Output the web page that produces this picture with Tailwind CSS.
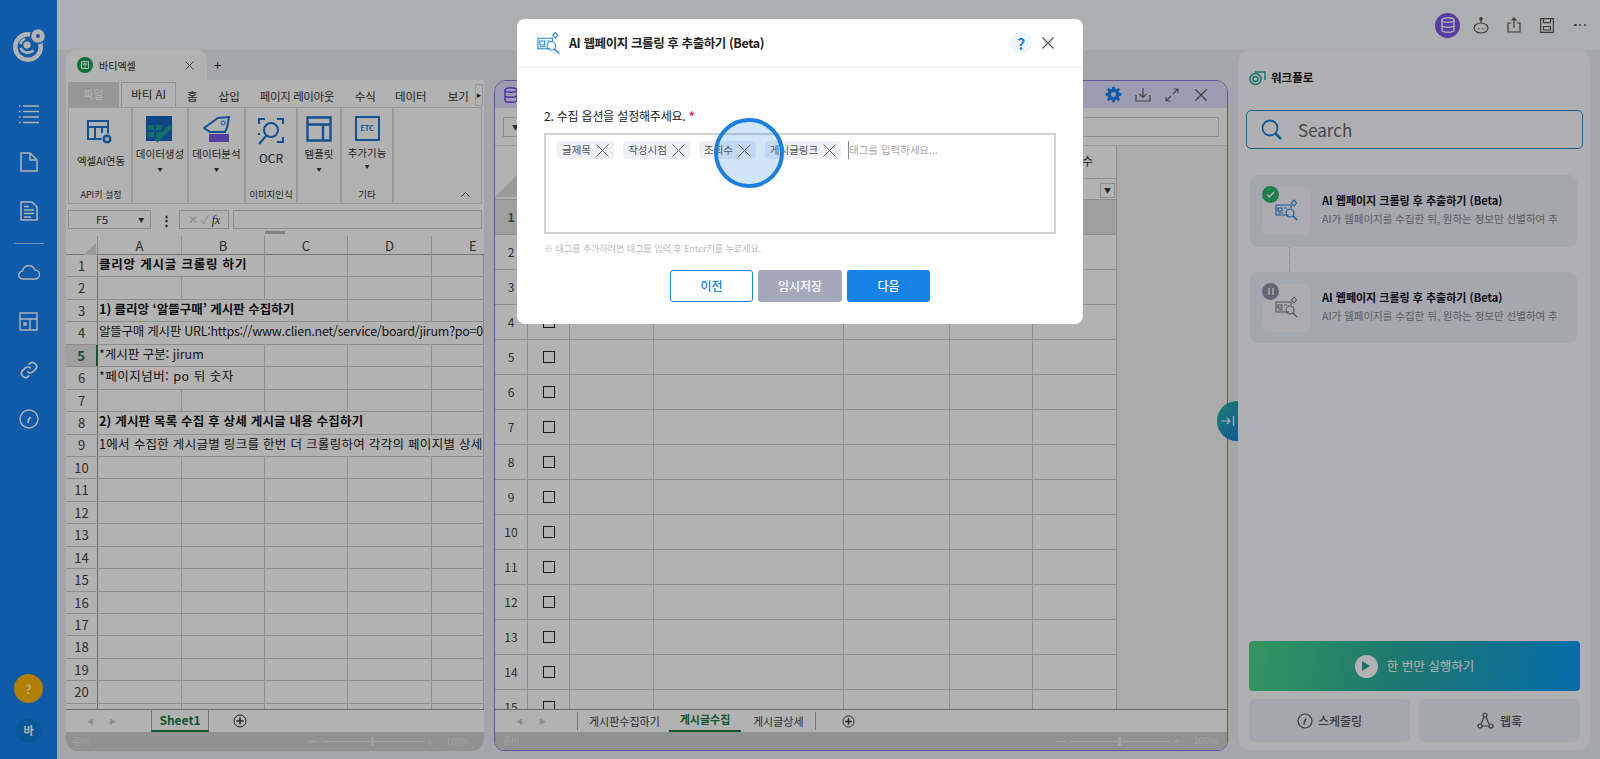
<!DOCTYPE html>
<html lang="ko"><head><meta charset="utf-8"><script src="https://cdn.jsdelivr.net/npm/@tailwindcss/browser@4"></script></head>
<body class="overflow-hidden">
<div class="relative flex h-[759px] w-[1600px] overflow-hidden bg-[#f9fafc] font-['Noto_Sans_CJK_KR','Noto_Sans',sans-serif] text-[#222]">
  <!-- sidebar -->
  <aside class="flex w-[57px] shrink-0 flex-col items-center bg-[#1683f4] text-white">
    <svg class="mt-[27px]" width="34" height="36" viewBox="0 0 34 36" fill="none"><circle cx="16" cy="20" r="15" fill="white"/><circle cx="16" cy="20" r="10.500" fill="#1683f4"/><circle cx="26" cy="9" r="7.500" fill="white" stroke="#1683f4" stroke-width="1.500"/><circle cx="26" cy="9" r="2" fill="#1683f4"/><circle cx="15" cy="18" r="3.600" fill="white"/><path d="M8.500 21c2.500 5 8 6 13 2.500" stroke="white" stroke-width="2.600"/><path d="M13 11.500c-2 1-4 3-4.500 5.500" stroke="white" stroke-width="2.400"/></svg>
    <svg class="mt-[41px]" width="20" height="20" viewBox="0 0 20 20" stroke="white" stroke-width="1.5" fill="none"><path d="M4 2h16M4 7.5h16M4 13h16M4 18.500h16"/><path d="M0 2h1.500M0 7.500h1.500M0 13h1.500M0 18.500h1.500"/></svg>
    <svg class="mt-[28px]" width="18" height="20" viewBox="0 0 18 20" stroke="white" stroke-width="1.500" fill="none"><path d="M1 1h9l7 7v11H1zM10 1v7h7"/></svg>
    <svg class="mt-[29px]" width="18" height="20" viewBox="0 0 18 20" stroke="white" stroke-width="1.500" fill="none"><path d="M1 1h11l5 5v13H1zM4 9h10M4 12.500h10M4 16h7M4 5.500h5"/></svg>
    <div class="mt-[22px] h-px w-[30px] bg-white/60"></div>
    <svg class="mt-[20px]" width="22" height="16" viewBox="0 0 22 16" stroke="white" stroke-width="1.400" fill="none"><path d="M5 15a4 4 0 0 1-.500-8A6.500 6.500 0 0 1 17 6a4.500 4.500 0 0 1 0 9z"/></svg>
    <svg class="mt-[32px]" width="19" height="19" viewBox="0 0 19 19" stroke="white" stroke-width="1.400" fill="none"><path d="M1 1h17v17H1zM1 7h17M11 7v11"/><rect x="5" y="11" width="2" height="2" fill="white"/></svg>
    <svg class="mt-[29px]" width="20" height="20" viewBox="0 0 24 24" stroke="white" stroke-width="2" fill="none"><path d="M10 14a5 5 0 0 0 7 0l3-3a5 5 0 0 0-7-7l-1.500 1.500M14 10a5 5 0 0 0-7 0l-3 3a5 5 0 0 0 7 7l1.500-1.500"/></svg>
    <svg class="mt-[29px]" width="20" height="20" viewBox="0 0 20 20" stroke="white" stroke-width="1.400" fill="none"><circle cx="10" cy="10" r="9"/><path d="M9 14l.500-3 2-3" stroke-width="1.800"/></svg>
    <div class="mt-auto flex h-[29px] w-[29px] items-center justify-center rounded-full bg-[#ffb700] text-[12px] font-bold text-white/80">?</div>
    <div class="mb-[16px] mt-[15px] flex h-[25px] w-[25px] items-center justify-center rounded-full bg-[#0a7fd8] text-[11px] font-bold text-white">바</div>
  </aside>

  <main class="flex min-w-0 flex-1 flex-col">
    <!-- top bar -->
    <div class="flex h-[50px] items-center justify-end bg-[#f8f9fc] pr-[14px]">
      <div class="flex h-[25px] w-[25px] items-center justify-center rounded-full bg-[#7a5ae8]">
        <svg width="14" height="16" viewBox="0 0 14 16" fill="none" stroke="white" stroke-width="1.400"><ellipse cx="7" cy="3" rx="6" ry="2.300"/><path d="M1 3v10c0 1.300 2.700 2.300 6 2.300s6-1 6-2.300V3M1 8c0 1.300 2.700 2.300 6 2.300S13 9.300 13 8"/></svg>
      </div>
      <svg class="ml-[13px]" width="16" height="17" viewBox="0 0 16 17" fill="none" stroke="#555" stroke-width="1.200"><ellipse cx="8" cy="11" rx="7" ry="5"/><path d="M8 6V2"/><circle cx="8" cy="1.800" r="1.200" fill="#555"/><path d="M6 11v1M10 11v1"/></svg>
      <svg class="ml-[18px]" width="14" height="16" viewBox="0 0 14 16" fill="none" stroke="#555" stroke-width="1.200"><path d="M4 6H1v9h12V6h-3M7 11V1M4.500 3.500L7 1l2.500 2.500"/></svg>
      <svg class="ml-[19px]" width="14" height="15" viewBox="0 0 14 15" fill="none" stroke="#555" stroke-width="1.200"><path d="M.6.6h12.800v13.800H.6zM3.500.6v4h7v-4M3.500 8.500h7v3.500h-7z"/></svg>
      <div class="ml-[20px] flex w-[12px] justify-between"><span class="h-[2.500px] w-[2.500px] rounded-full bg-[#555]"></span><span class="h-[2.500px] w-[2.500px] rounded-full bg-[#555]"></span><span class="h-[2.500px] w-[2.500px] rounded-full bg-[#555]"></span></div>
    </div>

    <div class="relative flex min-h-0 flex-1 gap-[10px] bg-[#eceef6] pb-[8px] pl-[9px] pr-[10px]">
      <!-- left sheet -->
      <section class="flex w-[418px] shrink-0 flex-col overflow-hidden rounded-b-[12px]">
        <div class="flex h-[30px] shrink-0 items-center">
          <div class="flex h-[30px] w-[141px] items-center rounded-t-[10px] bg-white pl-[11px]">
            <span class="flex h-[16px] w-[16px] items-center justify-center rounded-full bg-[#17a34f]"><svg width="8" height="8" viewBox="0 0 8 8" fill="none" stroke="white"><path d="M.5.500h7v7h-7zM.5 3h7M4 .5v7"/></svg></span>
            <span class="ml-[6px] text-[10px] text-[#333]">바티엑셀</span>
            <svg class="ml-[49px]" width="9" height="9" viewBox="0 0 9 9" stroke="#666"><path d="M.5.500l8 8M8.500.500l-8 8"/></svg>
          </div>
          <span class="ml-[7px] text-[13px] text-[#222]">+</span>
        </div>
        <div class="flex min-h-0 flex-1 flex-col bg-white pt-[2px]">
          <div class="flex h-[25px] shrink-0 whitespace-nowrap px-[2px] text-[11.500px] text-[#333]">
            <div class="flex w-[51px] shrink-0 items-center justify-center bg-[#d8d8d8] text-[11px] text-white">파일</div>
            <div class="ml-[2px] flex w-[55px] shrink-0 items-center justify-center border border-b-0 border-[#d0d0d0] bg-white">바티 AI</div>
            <span class="ml-[11px] shrink-0 leading-[28px]">홈</span>
            <span class="ml-[21px] shrink-0 leading-[28px]">삽입</span>
            <span class="ml-[20px] w-[72px] shrink-0 leading-[28px] tracking-[-0.4px]">페이지 레이아웃</span>
            <span class="ml-[23px] shrink-0 leading-[28px]">수식</span>
            <span class="ml-[19px] shrink-0 leading-[28px]">데이터</span>
            <span class="ml-[21px] shrink-0 leading-[28px]">보기</span>
            <span class="ml-[6px] mt-[2px] flex h-[22px] w-[8px] shrink-0 items-center justify-center border border-[#ddd] text-[5px]">▶</span>
          </div>
          <!-- ribbon -->
          <div class="mx-[2px] flex h-[97px] shrink-0 border border-[#ddd] text-[11px] text-[#333]">
            <div class="flex w-[64px] flex-col items-center border-r-2 border-[#ddd] pl-[2px] pt-[11px]">
              <svg width="28" height="28" viewBox="0 0 28 28" fill="none" stroke="#1976d2" stroke-width="2"><path d="M1 2h20v18H1zM1 8h20M8 8v12M15 8v6"/><circle cx="20" cy="20" r="5" fill="#1976d2" stroke="white" stroke-width="1"/><circle cx="20" cy="20" r="2" fill="white" stroke="none"/></svg>
              <span class="mt-[6px] whitespace-nowrap text-[10.500px]">엑셀AI연동</span>
              <span class="mb-[2px] mt-auto whitespace-nowrap text-[9px]">API키 설정</span>
            </div>
            <div class="flex w-[56px] flex-col items-center border-r-2 border-[#ddd] pt-[8px]">
              <svg width="28" height="27" viewBox="0 0 28 27"><rect width="26" height="25" fill="#1565c0"/><g fill="#1a9d8f"><rect x="2" y="9" width="6" height="5"/><rect x="10" y="9" width="6" height="5"/><rect x="2" y="16" width="6" height="5"/><rect x="10" y="16" width="6" height="5"/></g><path d="M10 25L25 10" stroke="#17a398" stroke-width="4"/></svg>
              <span class="mt-[3px] whitespace-nowrap text-[10.500px]">데이터생성</span>
              <span class="mt-[3px] text-[5px]">▼</span>
            </div>
            <div class="flex w-[57px] flex-col items-center border-r-2 border-[#ddd] pt-[7px]">
              <svg width="28" height="28" viewBox="0 0 28 28" fill="none"><path d="M1 13L15 3l11-1-2 11-2 4H7z" stroke="#1976d2" stroke-width="2"/><circle cx="20" cy="8" r="2" stroke="#1976d2"/><rect x="6" y="19" width="20" height="8" fill="#7a5be0"/></svg>
              <span class="mt-[3px] whitespace-nowrap text-[10.500px]">데이터분석</span>
              <span class="mt-[3px] text-[5px]">▼</span>
            </div>
            <div class="flex w-[52px] flex-col items-center border-r-2 border-[#ddd] pt-[9px]">
              <svg width="28" height="28" viewBox="0 0 28 28" fill="none" stroke="#1976d2" stroke-width="2"><path d="M2 7V2h6M20 2h6v5M26 20v5h-6M2 16v2"/><circle cx="14" cy="13" r="7"/><path d="M9 19l-7 8"/></svg>
              <span class="mt-[4px] text-[12px]">OCR</span>
              <span class="mb-[2px] mt-auto whitespace-nowrap text-[9.500px]">이미지인식</span>
            </div>
            <div class="flex w-[44px] flex-col items-center border-r-2 border-[#ddd] pt-[8px]">
              <svg width="26" height="26" viewBox="0 0 26 26" fill="none" stroke="#1976d2" stroke-width="2.400"><path d="M1.500 1.500h23v23h-23zM1.500 8.500h23M17 8.500v16"/></svg>
              <span class="mt-[4px] whitespace-nowrap text-[10.500px]">템플릿</span>
              <span class="mt-[3px] text-[5px]">▼</span>
            </div>
            <div class="flex w-[52px] flex-col items-center border-r-2 border-[#ddd] pt-[8px]">
              <div class="flex h-[25px] w-[25px] items-center justify-center border-[2.500px] border-[#1976d2] text-[7px] font-bold text-[#1976d2]">ETC</div>
              <span class="mt-[4px] whitespace-nowrap text-[10.500px]">추가기능</span>
              <span class="mt-[1px] text-[5px]">▼</span>
              <span class="mb-[2px] mt-auto text-[9.500px]">기타</span>
            </div>
            <div class="flex flex-1 items-end justify-end pb-[6px] pr-[11px]"><svg width="9" height="6" viewBox="0 0 9 6" fill="none" stroke="#444"><path d="M.5 5.500l4-4 4 4"/></svg></div>
          </div>
          <!-- formula -->
          <div class="mt-[6px] flex h-[19px] shrink-0 items-center px-[2px] text-[11px] text-[#333]">
            <div class="flex h-full w-[83px] items-center border border-[#ccc]"><span class="ml-[27px]">F5</span><span class="ml-[30px] text-[6px]">▼</span></div>
            <span class="ml-[9px] text-[13px] font-bold">⋮</span>
            <div class="ml-[6px] flex h-full w-[50px] items-center justify-center gap-[3px] border border-[#ccc] font-['Liberation_Serif',serif] text-[12px] italic"><span class="not-italic text-[#ccc]">✕</span><span class="not-italic text-[#ccc]">✓</span><span>fx</span></div>
            <div class="ml-[4px] h-full flex-1 border border-[#ccc]"></div>
          </div>
          <div class="mx-auto mt-[2px] h-[3px] w-[20px] shrink-0 bg-[#bbb]"></div>
          <div class="mt-[2px] grid h-[19px] shrink-0 grid-cols-[32px_84px_83px_83px_84px_52px] border-b border-[#aaa] text-center text-[13px] text-[#444]">
            <div class="relative border-r border-[#ccc]"><svg class="absolute bottom-[1px] right-[1px]" width="13" height="12"><path d="M13 0v12H0z" fill="#ddd"/></svg></div>
            <div class="border-r border-[#ccc]">A</div><div class="border-r border-[#ccc]">B</div><div class="border-r border-[#ccc]">C</div><div class="border-r border-[#ccc]">D</div><div class="pl-[37px] text-left">E</div>
          </div>
          <div id="leftrows" class="min-h-0 flex-1 overflow-hidden"></div>
          <div class="flex h-[23px] shrink-0 items-center border-t border-[#999] text-[9px] text-[#ccc]">
            <span class="ml-[21px] text-[7px]">◀</span><span class="ml-[15px] text-[7px]">▶</span>
            <div class="-mt-px ml-[35px] flex h-[23px] w-[58px] items-center justify-center border-x border-b-[2px] border-[#aaa] border-b-[#1c7a46] text-[12px] font-bold text-[#1c7a46]">Sheet1</div>
            <svg class="ml-[24px]" width="14" height="14" viewBox="0 0 14 14" fill="none" stroke="#333"><circle cx="7" cy="7" r="6"/><path d="M3.500 7h7M7 3.500v7" stroke-width="1.500"/></svg>
          </div>
          <div class="flex h-[19px] shrink-0 items-center bg-[#d0d0d0] pl-[8px] text-[9px] text-[#e8e8e8]">
            <span>준비</span>
            <span class="ml-[218px] h-px w-[9px] bg-[#e8e8e8]"></span>
            <span class="relative ml-[5px] h-px w-[100px] bg-[#e8e8e8]"><span class="absolute -top-[4px] left-[48px] h-[9px] w-[3px] bg-[#e8e8e8]"></span></span>
            <span class="ml-[4px] text-[12px]">+</span>
            <span class="ml-[13px]">100%</span>
          </div>
        </div>
      </section>

      <!-- right sheet -->
      <section class="mt-[30px] flex w-[734px] shrink-0 flex-col overflow-hidden rounded-b-[10px] rounded-t-[12px] border border-[#8f74e0] bg-white">
        <div class="flex h-[27px] shrink-0 items-center bg-[#e0dfff] pl-[9px]">
          <svg width="14" height="16" viewBox="0 0 14 16" fill="none" stroke="#6f4be8" stroke-width="1.400"><ellipse cx="7" cy="3" rx="6" ry="2.300"/><path d="M1 3v10c0 1.300 2.700 2.300 6 2.300s6-1 6-2.300V3M1 8c0 1.300 2.700 2.300 6 2.300S13 9.300 13 8"/></svg>
          <svg class="ml-auto" width="17" height="17" viewBox="0 0 24 24" fill="none" stroke="#1683f4" stroke-width="5"><circle cx="12" cy="12" r="6"/><path d="M12 1v4M12 19v4M1 12h4M19 12h4M4 4l3 3M17 17l3 3M4 20l3-3M17 7l3-3" stroke-width="4"/></svg>
          <svg class="ml-[13px]" width="16" height="15" viewBox="0 0 16 15" fill="none" stroke="#666" stroke-width="1.200"><path d="M1 8v6h14V8M8 1v9M4.500 7L8 10.500 11.500 7"/></svg>
          <svg class="ml-[14px]" width="14" height="14" viewBox="0 0 14 14" fill="none" stroke="#666" stroke-width="1.200"><path d="M8 6l5-5M9 1h4v4M6 8l-5 5M1 9v4h4"/></svg>
          <svg class="ml-[16px] mr-[20px]" width="12" height="12" viewBox="0 0 12 12" stroke="#555" stroke-width="1.100"><path d="M.5.500l11 11M11.500.500l-11 11"/></svg>
        </div>
        <div class="flex h-[38px] shrink-0 items-center border-b border-[#ddd] px-[8px]">
          <div class="h-[20px] w-[30px] border border-[#ccc] pl-[8px] text-[7px] leading-[18px] text-[#444]">▼</div>
          <div class="ml-auto h-[20px] w-[200px] border border-[#ccc]"></div>
        </div>
        <div class="flex min-h-0 flex-1">
          <div class="w-[622px] shrink-0 overflow-hidden">
            <div class="grid h-[54px] grid-cols-[33px_42px_84px_190px_106px_83px_84px] border-b border-[#ccc]">
              <div class="relative border-r border-[#ccc]"><svg class="absolute bottom-[2px] right-0" width="32" height="32"><path d="M32 0v32H0z" fill="#ddd"/></svg></div>
              <div class="border-r border-[#ccc]"></div><div class="border-r border-[#ccc]"></div><div class="border-r border-[#ccc]"></div><div class="border-r border-[#ccc]"></div><div class="border-r border-[#ccc]"></div>
              <div class="relative flex flex-col items-center border-r border-[#ccc] pt-[6px] text-[12px] text-[#333]"><span class="pl-[26px]">수</span><div class="absolute inset-x-0 top-[32px] border-t border-[#ccc]"></div><span class="absolute bottom-[1px] right-[1px] flex h-[15px] w-[15px] items-center justify-center border border-[#ccc] text-[7px]">▼</span></div>
            </div>
            <div id="rightrows" class="overflow-hidden"></div>
          </div>
          <div class="flex-1 bg-[#f5f5f5]"></div>
        </div>
        <div class="flex h-[23px] shrink-0 items-center border-t border-[#999] bg-white text-[11px] text-[#444]">
          <span class="ml-[21px] text-[7px] text-[#ccc]">◀</span><span class="ml-[16px] text-[7px] text-[#ccc]">▶</span>
          <div class="ml-[31px] h-[18px] border-l border-[#aaa]"></div>
          <span class="ml-[11px] w-[80px]">게시판수집하기</span>
          <div class="-mt-px flex h-[23px] w-[72px] items-center justify-center border-b-[2px] border-b-[#1c7a46] font-bold text-[#1c7a46]">게시글수집</div>
          <span class="ml-[12px] w-[62px]">게시글상세</span>
          <div class="h-[18px] border-l border-[#aaa]"></div>
          <svg class="ml-[26px]" width="13" height="13" viewBox="0 0 14 14" fill="none" stroke="#333"><circle cx="7" cy="7" r="6"/><path d="M3.500 7h7M7 3.500v7" stroke-width="1.500"/></svg>
        </div>
        <div class="flex h-[18px] shrink-0 items-center bg-[#d0d0d0] pl-[8px] text-[9px] text-[#e8e8e8]">
          <span>준비</span>
          <span class="ml-auto h-px w-[9px] bg-[#e8e8e8]"></span>
          <span class="relative ml-[5px] h-px w-[100px] bg-[#e8e8e8]"><span class="absolute -top-[4px] left-[48px] h-[9px] w-[3px] bg-[#e8e8e8]"></span></span>
          <span class="ml-[4px] text-[12px]">+</span>
          <span class="ml-[13px] mr-[10px]">100%</span>
        </div>
      </section>

      <!-- workflow panel -->
      <section class="relative mb-px flex min-w-0 flex-1 flex-col rounded-[12px] bg-[#fdfdff] pb-[8px] pl-[8px] pr-[7px]">
        <div class="absolute -left-[21px] top-[351px] flex h-[40px] w-[21px] items-center justify-center rounded-l-full bg-[linear-gradient(135deg,#2bb39a,#1683d8)]"><svg width="14" height="12" viewBox="0 0 14 12" fill="none" stroke="white" stroke-width="1.200"><path d="M0 6h9M6 3l3 3-3 3M12.500 1v10"/></svg></div>
        <div class="ml-[3px] mt-[20px] flex h-[16px] items-center">
          <svg width="17" height="16" viewBox="0 0 17 16" fill="none" stroke="#28a79d" stroke-width="1.500"><circle cx="6.500" cy="9" r="5.500"/><circle cx="6.500" cy="9" r="2.500"/><path d="M6 2h10v8"/></svg>
          <span class="ml-[5px] text-[11.500px] font-bold text-[#111]">워크플로</span>
        </div>
        <div class="mt-[24px] flex h-[39px] items-center rounded-[5px] border border-[#2a8fc8] pl-[14px]">
          <svg width="21" height="21" viewBox="0 0 21 21" fill="none" stroke="#1683d8" stroke-width="1.800"><circle cx="9" cy="9" r="7.500"/><path d="M14.500 14.500l5.500 5.500" stroke-width="2.500"/></svg>
          <span class="ml-[16px] text-[17px] text-[#666]">Search</span>
        </div>
        <div class="ml-[4px] mr-[6px] mt-[26px] flex h-[72px] items-center rounded-[8px] bg-[#eceff9] pl-[13px]">
          <div class="relative flex h-[48px] w-[48px] shrink-0 items-center justify-center rounded-[6px] bg-[#f6f7fc]">
            <span class="absolute -left-[1px] -top-[1px] flex h-[17px] w-[17px] items-center justify-center rounded-full bg-[#2fb36e]"><svg width="9" height="7" viewBox="0 0 9 7" fill="none" stroke="white" stroke-width="1.500"><path d="M1 3.500L3.500 6 8 1"/></svg></span>
            <svg width="24" height="24" viewBox="0 0 24 24" fill="none" stroke="#1b82e0" stroke-width="1.100"><path d="M14 16H1V6h15v3M3 9h4v3H3zM9 9h3M3 14h5"/><circle cx="15" cy="14" r="4"/><path d="M18 17l4 4" stroke-width="1.500"/><path d="M19 1l2.500 3L19 7l-2.500-3z"/></svg>
          </div>
          <div class="mb-[4px] ml-[11px] min-w-0 flex-1 pr-[20px]">
            <div class="truncate text-[11px] font-bold leading-[16px] text-[#111]">AI 웹페이지 크롤링 후 추출하기 (Beta)</div>
            <div class="mt-[3px] overflow-hidden whitespace-nowrap text-[10.500px] leading-[15px] text-[#888]">AI가 웹페이지를 수집한 뒤, 원하는 정보만 선별하여 추출합니다.</div>
          </div>
        </div>
        <div class="ml-[43px] h-[25px] border-l border-dotted border-[#bbb]"></div>
        <div class="ml-[4px] mr-[6px] flex h-[71px] items-center rounded-[8px] bg-[#eceff9] pl-[13px]">
          <div class="relative flex h-[48px] w-[48px] shrink-0 items-center justify-center rounded-[6px] bg-[#f6f7fc]">
            <span class="absolute -left-[1px] -top-[1px] flex h-[17px] w-[17px] items-center justify-center gap-[2px] rounded-full bg-[#8f93a8]"><i class="h-[7px] w-[2px] bg-white/70"></i><i class="h-[7px] w-[2px] bg-white/70"></i></span>
            <svg width="24" height="24" viewBox="0 0 24 24" fill="none" stroke="#777" stroke-width="1.100"><path d="M14 16H1V6h15v3M3 9h4v3H3zM9 9h3M3 14h5"/><circle cx="15" cy="14" r="4"/><path d="M18 17l4 4" stroke-width="1.500"/><path d="M19 1l2.500 3L19 7l-2.500-3z"/></svg>
          </div>
          <div class="mb-[4px] ml-[11px] min-w-0 flex-1 pr-[20px]">
            <div class="truncate text-[11px] font-bold leading-[16px] text-[#111]">AI 웹페이지 크롤링 후 추출하기 (Beta)</div>
            <div class="mt-[3px] overflow-hidden whitespace-nowrap text-[10.500px] leading-[15px] text-[#888]">AI가 웹페이지를 수집한 뒤, 원하는 정보만 선별하여 추출합니다.</div>
          </div>
        </div>
        <div class="ml-[3px] mr-[3px] mt-auto flex h-[50px] items-center justify-center rounded-[4px] bg-[linear-gradient(100deg,#4cd68a,#2aac9e_45%,#0a9cf5)] text-[12.500px] text-white">
          <span class="flex h-[23px] w-[23px] items-center justify-center rounded-full bg-white"><svg width="8" height="10" viewBox="0 0 8 10"><path d="M0 0l8 5-8 5z" fill="#22a79a"/></svg></span>
          <span class="ml-[9px]">한 번만 실행하기</span>
        </div>
        <div class="ml-[3px] mr-[3px] mt-[8px] flex h-[43px] gap-[9px] text-[12px] font-medium text-[#555]">
          <div class="flex flex-1 items-center justify-center gap-[5px] rounded-[6px] bg-[#eceff9]"><svg width="16" height="16" viewBox="0 0 16 16" fill="none" stroke="#555" stroke-width="1.200"><circle cx="8" cy="8" r="7"/><path d="M7 11.500l.5-3 1.500-3" stroke-width="1.500"/></svg>스케줄링</div>
          <div class="flex flex-1 items-center justify-center gap-[6px] rounded-[6px] bg-[#eceff9]"><svg width="17" height="17" viewBox="0 0 17 17" fill="none" stroke="#555" stroke-width="1.200"><circle cx="8" cy="3" r="2"/><circle cx="3" cy="14" r="2"/><circle cx="14" cy="14" r="2"/><path d="M7 5l-3 7M5 14h7M9 5l3 7"/></svg>웹훅</div>
        </div>
      </section>
    </div>
  </main>

  <!-- dim + modal -->
  <div class="absolute inset-0 flex justify-center bg-black/30 pt-[19px]">
    <div class="relative h-[305px] w-[566px] rounded-[8px] bg-white">
      <div class="flex h-[49px] items-center border-b border-[#f0f0f0] pl-[20px] pr-[29px]">
        <svg width="23" height="24" viewBox="0 0 24 24" fill="none" stroke="#1b82e0" stroke-width="1.100"><path d="M14 18H1V7h15v3M3 10h5v4H3zM10 10h3M3 16h6"/><circle cx="15" cy="15" r="4.500"/><path d="M18 18l5 5" stroke-width="1.600"/><path d="M19 1l2.500 3L19 7l-2.500-3z"/></svg>
        <span class="ml-[9px] text-[12.500px] font-semibold tracking-[-0.4px] text-[#222]">AI 웹페이지 크롤링 후 추출하기 (Beta)</span>
        <span class="ml-auto flex h-[22px] w-[22px] items-center justify-center rounded-full bg-[#eef6fd] text-[16px] font-bold text-[#1683e8]">?</span>
        <svg class="ml-[10px]" width="12" height="12" viewBox="0 0 12 12" stroke="#555" stroke-width="1.100"><path d="M.5.500l11 11M11.500.500l-11 11"/></svg>
      </div>
      <div class="px-[27px]">
        <div class="mt-[38px] text-[12px] leading-[20px] tracking-[-0.2px] text-[#222]">2. 수집 옵션을 설정해주세요. <span class="font-bold text-[#e8265e]">*</span></div>
        <div class="mt-[7px] flex h-[101px] items-start gap-[9px] border-2 border-[#d2d2d6] pl-[11px] pt-[6px] text-[10.500px] text-[#555]">
          <span class="flex h-[18px] w-[57px] items-center justify-center gap-[5px] rounded-[4px] bg-[#eef0f6]">글제목<svg width="13" height="13" viewBox="0 0 13 13" stroke="#666"><path d="M.5.500l12 12M12.500.500l-12 12"/></svg></span>
          <span class="flex h-[18px] w-[67px] items-center justify-center gap-[5px] rounded-[4px] bg-[#eef0f6]">작성시점<svg width="13" height="13" viewBox="0 0 13 13" stroke="#666"><path d="M.5.500l12 12M12.500.500l-12 12"/></svg></span>
          <span class="flex h-[18px] w-[57px] items-center justify-center gap-[5px] rounded-[4px] bg-[#eef0f6]">조회수<svg width="13" height="13" viewBox="0 0 13 13" stroke="#666"><path d="M.5.500l12 12M12.500.500l-12 12"/></svg></span>
          <span class="flex h-[18px] w-[76px] items-center justify-center gap-[5px] rounded-[4px] bg-[#eef0f6]">게시글링크<svg width="13" height="13" viewBox="0 0 13 13" stroke="#666"><path d="M.5.500l12 12M12.500.500l-12 12"/></svg></span>
          <span class="-ml-[2px] flex h-[18px] items-center border-l border-[#888] text-[#aaa]">태그를 입력하세요...</span>
        </div>
        <div class="mt-[8px] text-[9px] leading-[14px] text-[#bbb]">※ 태그를 추가하려면 태그를 입력 후 Enter키를 누르세요.</div>
        <div class="mt-[14px] flex justify-center gap-[5px] text-[12px] font-medium">
          <span class="flex h-[32px] w-[83px] items-center justify-center rounded-[3px] border border-[#1683e8] text-[#1683e8]">이전</span>
          <span class="flex h-[32px] w-[84px] items-center justify-center rounded-[3px] bg-[#a5a8bb] text-white">임시저장</span>
          <span class="flex h-[32px] w-[83px] items-center justify-center rounded-[3px] bg-[#1683e8] text-white">다음</span>
        </div>
      </div>
      <div class="absolute left-[197px] top-[99px] h-[70px] w-[70px] rounded-full border-[4px] border-[#1a7fe0] bg-[#1a7fe0]/20"></div>
    </div>
  </div>
</div>
<script>
const lt={1:[2,'클리앙 게시글 크롤링 하기','font-bold text-[#111] tracking-[0.8px]'],3:[3,"1) 클리앙 ‘알뜰구매’ 게시판 수집하기",'font-bold text-[#111]'],4:[5,'알뜰구매 게시판 URL:https://www.clien.net/service/board/jirum?po=0','text-[#222] tracking-[-0.25px]'],5:[2,'*게시판 구분: jirum','text-[#222]'],6:[2,'*페이지넘버: po 뒤 숫자','text-[#222] tracking-[0.5px]'],8:[4,'2) 게시판 목록 수집 후 상세 게시글 내용 수집하기','font-bold text-[#111] tracking-[0.2px]'],9:[5,'1에서 수집한 게시글별 링크를 한번 더 크롤링하여 각각의 페이지별 상세 내용을 수집','text-[#222] tracking-[0.3px]']};
const span={2:'col-span-2',3:'col-span-3',4:'col-span-4',5:'col-span-5'};
let h='';
for(let r=1;r<=21;r++){
 const sel=r===5;
 h+='<div class="grid h-[22.45px] grid-cols-[32px_84px_83px_83px_84px_52px] border-b border-[#ccc]">';
 h+=sel?'<div class="flex items-center justify-center border-r-2 border-[#1c7a46] bg-[#e6e6e6] text-[13px] font-bold text-[#1c7a46]">5</div>':'<div class="flex items-center justify-center border-r border-[#999] text-[13px] text-[#444]">'+r+'</div>';
 let used=0;
 if(lt[r]){const t=lt[r];h+='<div class="'+span[t[0]]+' overflow-hidden whitespace-nowrap border-r border-[#ccc] pl-[1px] text-[12.500px] leading-[18px] '+t[2]+'">'+t[1]+'</div>';used=t[0];}
 for(let c=used;c<5;c++)h+='<div class="border-r border-[#ccc]"></div>';
 h+='</div>';
}
document.getElementById('leftrows').innerHTML=h;
let g='';
for(let r=1;r<=15;r++){
 const a=r===1;
 g+='<div class="grid h-[35px] grid-cols-[33px_42px_84px_190px_106px_83px_84px] border-b border-[#ccc] '+(a?'bg-[#e4e4e4]':'')+'">';
 g+=a?'<div class="flex items-center justify-center border-r border-[#ccc] text-[12px] font-bold text-[#1c7a46]">1</div>':'<div class="flex items-center justify-center border-r border-[#ccc] text-[12px] text-[#444]">'+r+'</div>';
 g+='<div class="flex items-center justify-center border-r border-[#ccc]"><span class="h-[12px] w-[12px] border border-[#222]"></span></div>';
 for(let c=0;c<5;c++)g+='<div class="border-r border-[#ccc]"></div>';
 g+='</div>';
}
document.getElementById('rightrows').innerHTML=g;
</script>
</body></html>
